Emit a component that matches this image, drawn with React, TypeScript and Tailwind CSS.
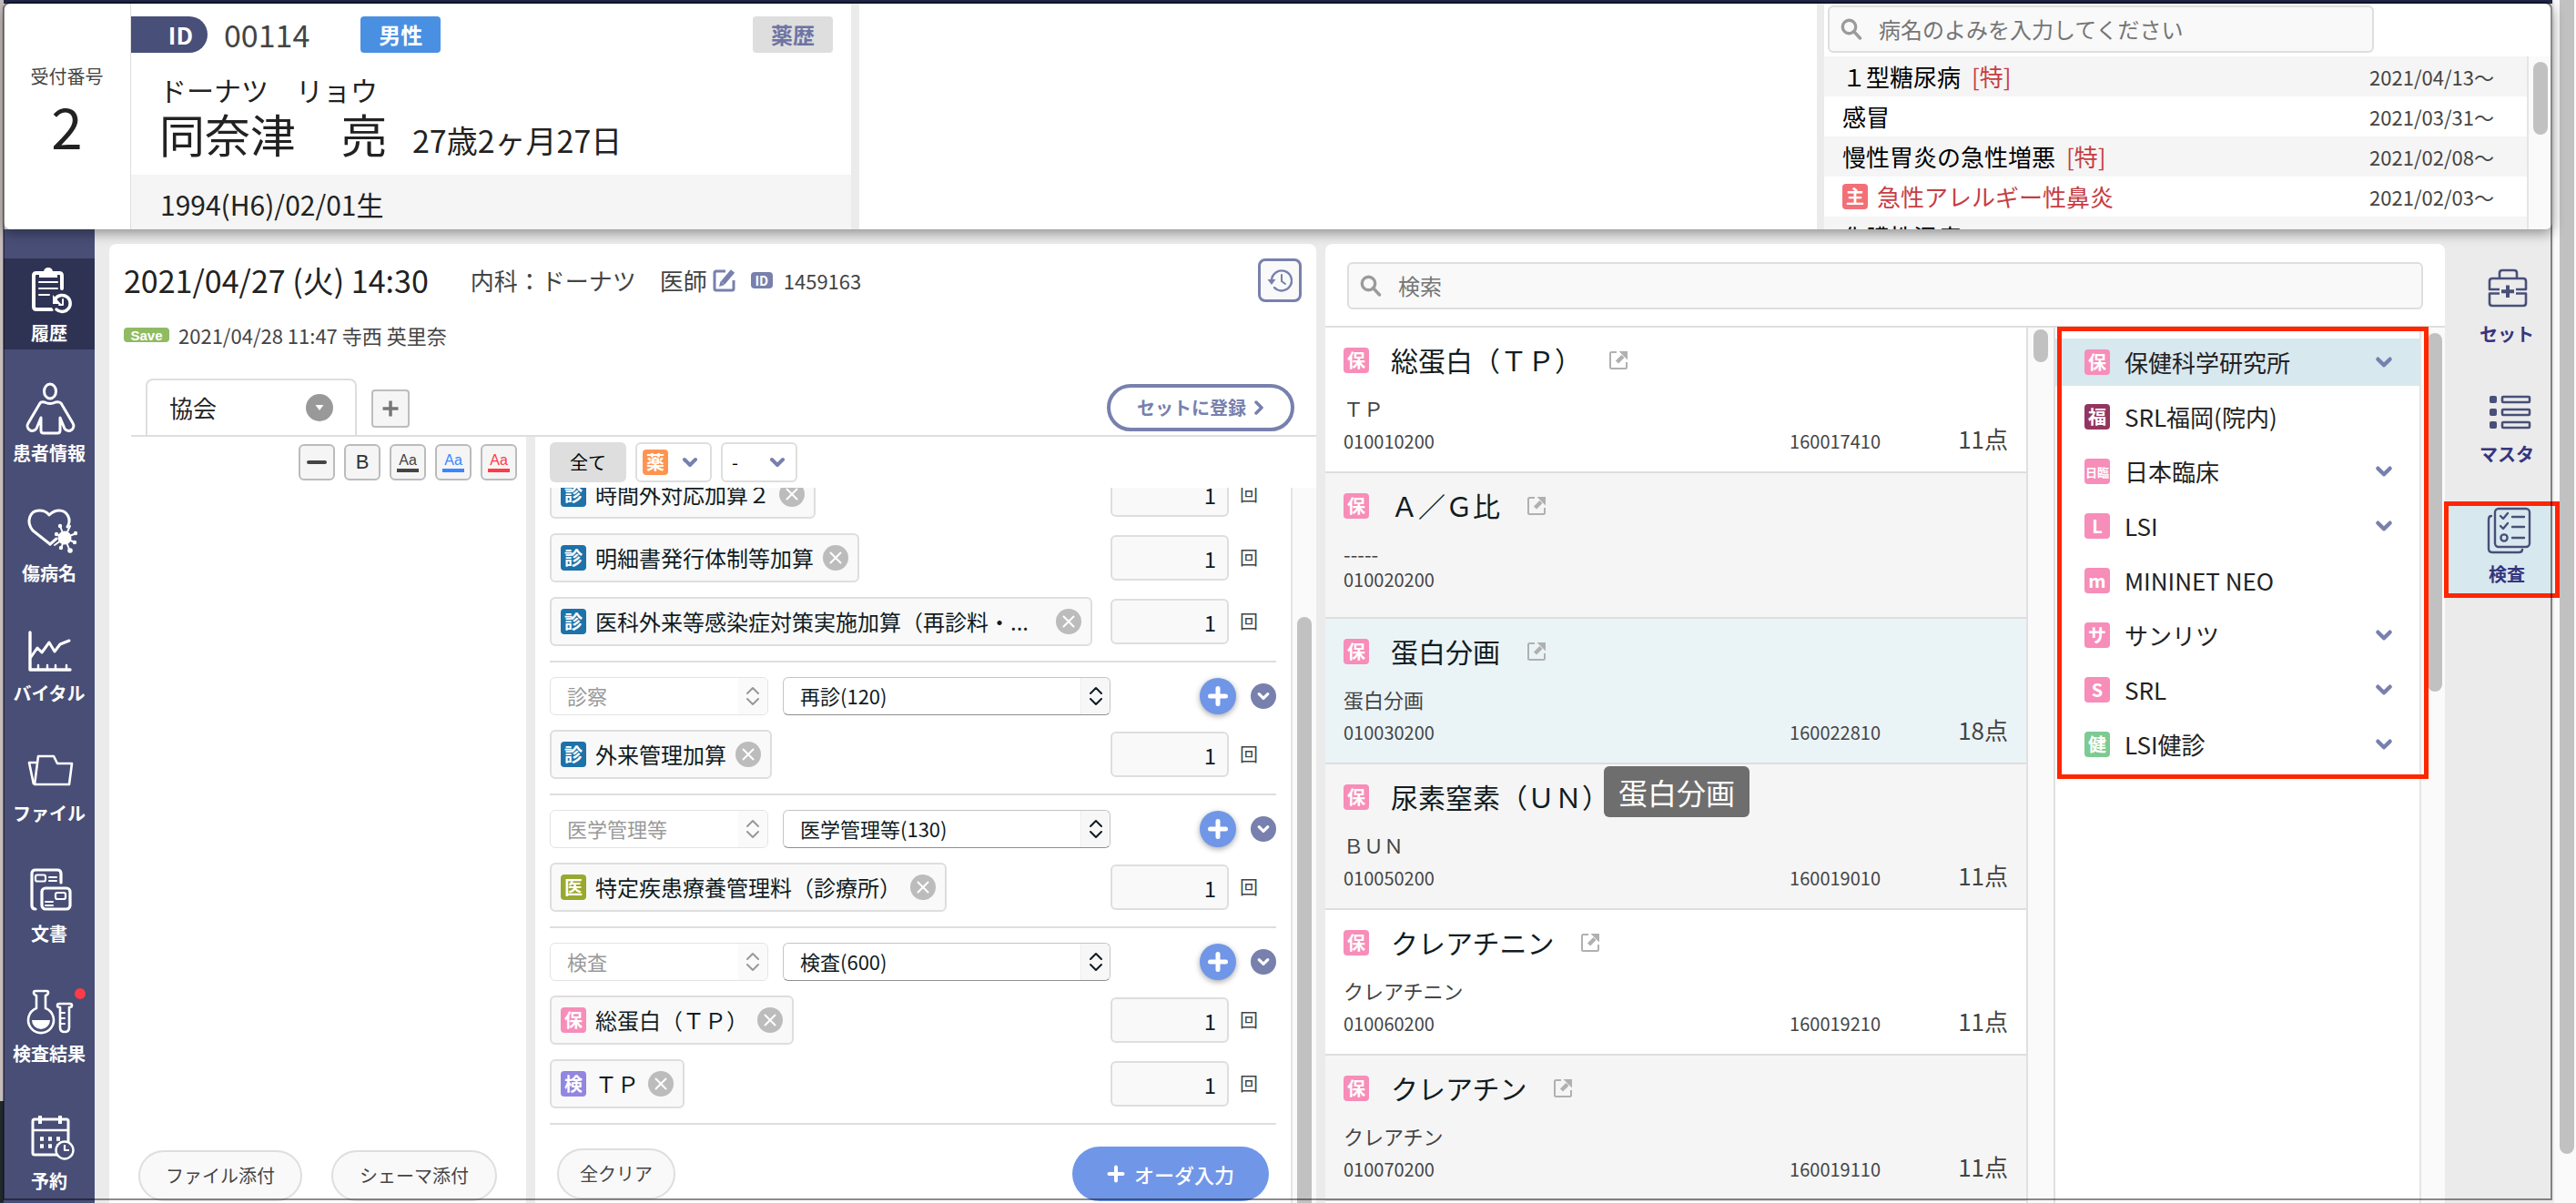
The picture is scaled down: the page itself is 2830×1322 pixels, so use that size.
import React from "react";

const FONT = "font-['Noto_Sans_CJK_JP','Noto_Sans',sans-serif]";

/* ---------- small icons ---------- */

function SearchIcon() {
  return (
    <svg viewBox="0 0 24 24" className="h-6 w-6 shrink-0" fill="none" stroke="#9b9b9b" strokeWidth="3.4">
      <circle cx="9.5" cy="9.5" r="7.2" />
      <path d="M14.5 14.5 21.5 22" strokeLinecap="round" />
    </svg>
  );
}

function ChevronDown({ className }: { className: string }) {
  return (
    <svg viewBox="0 0 20 20" className={className} fill="none" stroke="currentColor" strokeWidth="4" strokeLinecap="round" strokeLinejoin="round">
      <path d="M4 7l6 6 6-6" />
    </svg>
  );
}

function ExternalIcon() {
  return (
    <svg viewBox="0 0 20 20" className="h-5 w-5" fill="none" stroke="#b0b0b0" strokeWidth="2">
      <path d="M8 1H2.500Q1 1 1 2.500V17.500Q1 19 2.500 19H17.500Q19 19 19 17.500V12" />
      <path d="M8.500 12 15 5.500" strokeWidth="4.500" />
      <path d="M10.500 0H20V9.500z" fill="#b0b0b0" stroke="none" />
    </svg>
  );
}

function UpDown() {
  return (
    <svg viewBox="0 0 16 22" className="h-[22px] w-4" fill="none" stroke="currentColor" strokeWidth="2" strokeLinecap="round" strokeLinejoin="round">
      <path d="M2 8l6-6 6 6M2 14l6 6 6-6" />
    </svg>
  );
}

/* ---------- left navigation icons ---------- */

const NAV_SVG = "h-14 w-14 overflow-visible";

function HistoryIcon() {
  return (
    <svg viewBox="0 0 56 56" className={NAV_SVG} fill="none" stroke="#fff" strokeWidth="4" strokeLinecap="round" strokeLinejoin="round">
      <path d="M42 27V13Q42 10 39 10H14Q11 10 11 13V47Q11 50 14 50H31" />
      <path d="M17 15V11Q17 8 20 8H22Q23 4 27 4T32 8H34Q37 8 37 11V15z" fill="#fff" stroke="none" />
      <path d="M17 20H37M17 27H37M17 34H28" strokeWidth="2" />
      <circle cx="42" cy="43" r="12" fill="#2e3354" stroke="none" />
      <path d="M35 38A9 9 0 1 1 36 50" strokeWidth="3.500" />
      <path d="M32 34V44H41z" fill="#fff" stroke="none" />
      <path d="M43 39V45H39" strokeWidth="2" />
    </svg>
  );
}

function PersonIcon() {
  return (
    <svg viewBox="0 0 56 56" className={NAV_SVG} fill="none" stroke="#fff" strokeWidth="3" strokeLinejoin="round">
      <ellipse cx="29" cy="8" rx="6.500" ry="8" />
      <path d="M18 21 5 43a5 5 0 0 0 9 6L19 37V51Q19 54 22 54H37Q40 54 40 51V37L45 49a5 5 0 0 0 9-6L41 21Q39 19 35 20Q29 23 23 20Q19 19 18 21z" />
    </svg>
  );
}

function DiseaseIcon() {
  return (
    <svg viewBox="0 0 56 56" className={NAV_SVG} fill="none" stroke="#fff" strokeWidth="3" strokeLinecap="round" strokeLinejoin="round">
      <path d="M29 44 10 29C2 19 7 7 17 7C23 7 26 9 28 12C31 9 34 7 39 7C48 7 53 17 48 25" />
      <path d="M29 44 36 38" />
      <circle cx="45" cy="37" r="7.500" fill="#fff" stroke="none" />
      <path d="M45 37 40 24M45 37 51 24M45 37 58 32M45 37 56 42M45 37 51 52M45 37 41 49M45 37 34 45M45 37 36 33" strokeWidth="2" />
      <g fill="#fff" stroke="none">
        <circle cx="40" cy="24" r="2.200" />
        <circle cx="57" cy="32" r="2.200" />
        <circle cx="56" cy="42" r="2.200" />
        <circle cx="51" cy="51" r="2.800" />
        <circle cx="41" cy="48" r="2.200" />
        <circle cx="36" cy="33" r="2.200" />
      </g>
    </svg>
  );
}

function VitalIcon() {
  return (
    <svg viewBox="0 0 56 56" className={NAV_SVG} fill="none" stroke="#fff" strokeWidth="3.400" strokeLinecap="round" strokeLinejoin="round">
      <path d="M7 9V50H51" />
      <path d="M8 36 15 26 20 31 28 20 34 30 40 22 50 18" strokeWidth="3" />
      <path d="M16 45V49M26 45V49M35 45V49M47 45V49" strokeWidth="2.400" />
    </svg>
  );
}

function FileIcon() {
  return (
    <svg viewBox="0 0 56 56" className={NAV_SVG} fill="none" stroke="#fff" strokeWidth="2.600" strokeLinejoin="round">
      <path d="M16 13H33L37 21H53L50 44H12z" />
      <path d="M14 20H6L11 44" />
    </svg>
  );
}

function DocIcon() {
  return (
    <svg viewBox="0 0 56 56" className={NAV_SVG} fill="none" stroke="#fff" strokeWidth="3.200" strokeLinecap="round">
      <path d="M41 20V10Q41 6 37 6H13Q9 6 9 10V45Q9 49 13 49" />
      <rect x="20" y="26" width="31" height="23" rx="4" />
      <rect x="13" y="11.500" width="11" height="7" rx="2" strokeWidth="2.200" />
      <rect x="35" y="31" width="11" height="7" rx="2" strokeWidth="2.200" />
      <path d="M28 14H36M28 18H36M24 41H32M24 45H32" strokeWidth="2" />
    </svg>
  );
}

function LabIcon() {
  return (
    <svg viewBox="0 0 56 56" className={NAV_SVG} fill="none" stroke="#fff" strokeWidth="2.600" strokeLinejoin="round" strokeLinecap="round">
      <path d="M14 26V12Q11 11 11 9Q11 7 13 7H25Q27 7 27 9Q27 11 24 12V26A14 14 0 1 1 14 26z" />
      <path d="M9 39H29A10 10 0 0 1 9 39z" fill="#fff" stroke="none" />
      <path d="M40 25Q37 25 37 23Q37 21 39 21H51Q53 21 53 23Q53 25 50 25V47Q50 52 45 52T40 47z" />
      <path d="M41 31H45M41 37H45M41 43H45" strokeWidth="2" />
    </svg>
  );
}

function CalendarIcon() {
  return (
    <svg viewBox="0 0 56 56" className={NAV_SVG} fill="none" stroke="#fff" strokeWidth="3" strokeLinejoin="round">
      <rect x="10" y="8" width="39" height="39" rx="2" />
      <path d="M10 20H49" strokeWidth="2.400" />
      <path d="M18 4V13M40 4V13" strokeWidth="4" />
      <path d="M18 29.500H22M27 29.500H31M36 29.500H40M18 37.500H22M27 37.500H31M36 37.500H40" strokeWidth="4.500" />
      <circle cx="45" cy="42" r="9.500" fill="#484e76" strokeWidth="2.400" />
      <path d="M45 36V42H50" strokeWidth="2.200" />
    </svg>
  );
}

/* ---------- right rail icons ---------- */

function CaseIcon() {
  return (
    <svg viewBox="0 0 56 56" className={NAV_SVG} fill="none" stroke="#484f78" strokeWidth="2.600" strokeLinejoin="round">
      <path d="M20 15V9Q20 6 23 6H36Q39 6 39 9V15" />
      <path d="M20 27H9V18Q9 15 12 15H46Q49 15 49 18V27H38" />
      <path d="M20 31.500H9V42Q9 45 12 45H46Q49 45 49 42V31.500H38" />
      <path d="M29 22.500V36M22 29.300H36" strokeWidth="4" />
    </svg>
  );
}

function ListIcon() {
  return (
    <svg viewBox="0 0 56 56" className={NAV_SVG} fill="none" stroke="#484f78" strokeWidth="2.600" strokeLinejoin="round">
      {[12, 26, 40].map((y) => (
        <g key={y}>
          <rect x="9" y={y} width="8" height="8" rx="2" fill="#484f78" stroke="none" />
          <rect x="23" y={y + 1} width="30" height="6" rx="1" />
        </g>
      ))}
    </svg>
  );
}

function ChecklistIcon() {
  return (
    <svg viewBox="0 0 56 56" className={NAV_SVG} fill="none" stroke="#484f78" strokeWidth="2.400" strokeLinecap="round" strokeLinejoin="round">
      <rect x="15" y="4" width="38" height="42" rx="4" />
      <path d="M11 12Q8 12 8 16V48Q8 52 12 52H41Q45 52 45 49" />
      <path d="M21 12 24 15 29 9M21 23 24 26 29 20M34 13H47M34 24H47M34 36H47" />
      <circle cx="25" cy="36" r="3.600" />
    </svg>
  );
}

/* ---------- shared pieces ---------- */

const BADGE_COLORS: Record<string, string> = {
  pink: "bg-[#f78db9]",
  plum: "bg-[#93355f]",
  green: "bg-[#7dca92]",
  blue: "bg-[#1c72a9]",
  olive: "bg-[#97a92f]",
  violet: "bg-[#9186e0]",
  orange: "bg-[#ff9450]",
  red: "bg-[#f36f76]",
};

function Badge({ text, color }: { text: string; color: string }) {
  return (
    <span
      className={`flex h-7 w-7 shrink-0 items-center justify-center whitespace-nowrap rounded font-bold leading-none text-white ${
        text.length > 1 ? "text-[13px]" : "text-xl"
      } ${BADGE_COLORS[color]}`}
    >
      {text}
    </span>
  );
}

function ItemRow({ badge, color, name, wide }: { badge: string; color: string; name: string; wide?: boolean }) {
  return (
    <div className="mb-4 flex h-[54px] items-center justify-between">
      <div
        className={`flex h-[54px] items-center gap-2.5 rounded-md border-2 border-[#dedede] bg-[#f9f9f9] px-2.5 ${
          wide ? "w-[596px]" : "max-w-[596px]"
        }`}
      >
        <Badge text={badge} color={color} />
        <span className="whitespace-nowrap text-2xl leading-9 text-[#101c22]">{name}</span>
        <button
          type="button"
          aria-label={`${name}を削除`}
          className="ml-auto flex h-7 w-7 shrink-0 items-center justify-center rounded-full bg-[#bcbcbc]"
        >
          <svg viewBox="0 0 14 14" className="h-3.5 w-3.5" stroke="#fff" strokeWidth="2" strokeLinecap="round">
            <path d="M1.500 1.500l11 11M12.500 1.500l-11 11" />
          </svg>
        </button>
      </div>
      <label className="flex w-[182px] shrink-0 items-center gap-3 text-xl text-[#444]">
        <input
          type="text"
          aria-label={`${name}の回数`}
          defaultValue="1"
          className="h-[50px] w-[130px] rounded-md border-2 border-[#dedede] bg-[#f9f9f9] px-3 text-right text-2xl text-[#101c22]"
        />
        回
      </label>
    </div>
  );
}

function GroupHeader({ kind, name }: { kind: string; name: string }) {
  return (
    <>
      <hr className="border-t-2 border-[#dedede]" />
      <div className="my-4 flex h-[42px] items-center">
        <div className="relative mr-4 h-[42px] w-60 text-[#999]">
          <select
            disabled
            aria-label={`${name}の区分`}
            className="h-full w-full appearance-none rounded-md border border-[#e3e3e3] bg-white pb-0.5 pl-[18px] text-[22px] leading-8 opacity-100"
          >
            <option>{kind}</option>
          </select>
          <span className="pointer-events-none absolute inset-y-px right-px flex w-8 items-center justify-center rounded-r-md bg-[#fafafa]">
            <UpDown />
          </span>
        </div>
        <div className="relative h-[42px] w-[360px] text-[#101c22]">
          <select
            aria-label={name}
            className="h-full w-full appearance-none rounded-md border border-[#c4c4c4] border-b-[#8f8f8f] bg-white pb-0.5 pl-[18px] text-[22px] leading-8"
          >
            <option>{name}</option>
          </select>
          <span className="pointer-events-none absolute inset-y-px right-px flex w-8 items-center justify-center rounded-r-md border-l border-[#ececec] bg-[#f7f7f7]">
            <UpDown />
          </span>
        </div>
        <div className="ml-auto flex items-center gap-4">
          <button
            type="button"
            aria-label="追加"
            className="flex h-10 w-10 items-center justify-center rounded-full bg-[#7096e8] shadow-[0_2px_6px_rgba(0,0,0,0.35)]"
          >
            <svg viewBox="0 0 22 22" className="h-[22px] w-[22px]" stroke="#fff" strokeWidth="5" strokeLinecap="round">
              <path d="M11 2.500v17M2.500 11h17" />
            </svg>
          </button>
          <button type="button" aria-label="展開" className="flex h-7 w-7 items-center justify-center rounded-full bg-[#7880ad] text-white">
            <ChevronDown className="h-4 w-4" />
          </button>
        </div>
      </div>
    </>
  );
}

/* ---------- header ---------- */

const DISEASES = [
  { name: "１型糖尿病", special: true, date: "2021/04/13～" },
  { name: "感冒", date: "2021/03/31～" },
  { name: "慢性胃炎の急性増悪", special: true, date: "2021/02/08～" },
  { name: "急性アレルギー性鼻炎", main: true, date: "2021/02/03～" },
  { name: "化膿性湿疹", date: "" },
];

function Header() {
  return (
    <header className="relative z-10 flex h-[248px] shrink-0 overflow-hidden rounded-lg bg-white shadow-[0_4px_14px_rgba(0,0,0,0.4)]">
      <div className="flex w-[140px] shrink-0 flex-col items-center border-r border-[#dedede] pt-16">
        <span className="text-xl leading-8 text-[#444]">受付番号</span>
        <span className="text-[62px] leading-[74px] text-[#222]">2</span>
      </div>
      <section className="flex w-[800px] shrink-0 flex-col border-r-[9px] border-[#ebebeb] text-[#222]">
        <div className="mt-3.5 flex h-10 items-center pr-5">
          <span className="flex h-10 w-[84px] items-center justify-end rounded-r-full bg-[#484f78] pb-0.5 pr-4 text-[26px] font-bold text-white">
            ID
          </span>
          <span className="ml-[18px] text-[34px] leading-9">
            <span className="text-[#444]">00114</span>
          </span>
          <span className="ml-14 flex h-10 w-[88px] items-center justify-center rounded bg-[#4a90e2] text-2xl font-bold text-white">
            男性
          </span>
          <button type="button" className="ml-auto h-10 w-[88px] rounded bg-[#dedede] text-2xl font-bold text-[#6c74a3]">
            薬歴
          </button>
        </div>
        <div className="pl-[31px]">
          <p className="mt-[18px] text-[30px] leading-[44px]">ドーナツ　リョウ</p>
          <p className="flex items-baseline leading-[52px]">
            <span className="text-[50px]">同奈津　亮</span>
            <span className="ml-7 text-[34px]">27歳2ヶ月27日</span>
          </p>
        </div>
        <p className="mt-auto flex h-[60px] items-center bg-[#f5f5f5] pl-8 pt-1 text-[30px] leading-10">1994(H6)/02/01生</p>
      </section>
      <div className="flex-1" />
      <section className="flex w-[808px] shrink-0 flex-col border-l-8 border-[#ebebeb]">
        <label className="ml-1 mt-0.5 flex h-[52px] w-[600px] shrink-0 items-center gap-[18px] rounded-md border-2 border-[#dedede] bg-[#f9f9f9] px-3">
          <SearchIcon />
          <input
            type="text"
            aria-label="病名"
            placeholder="病名のよみを入力してください"
            className="min-w-0 flex-1 bg-transparent text-2xl placeholder:text-[#757575]"
          />
        </label>
        <div className="mt-1 flex min-h-0 flex-1">
          <ul className="flex-1 overflow-hidden">
            {DISEASES.map((d) => (
              <li key={d.name} className="flex h-11 items-center bg-white pl-5 pr-9 odd:bg-[#f5f5f5]">
                {d.main && (
                  <span className="mr-2.5">
                    <Badge text="主" color="red" />
                  </span>
                )}
                <span className={d.main ? "text-[26px] leading-9 text-[#c73d43]" : "text-[26px] leading-9 text-black"}>{d.name}</span>
                {d.special && <span className="ml-3 text-[26px] leading-9 text-[#c73d43]">[特]</span>}
                <span className="ml-auto text-[22px] leading-8 text-[#444]">{d.date}</span>
              </li>
            ))}
          </ul>
          <div className="flex w-7 justify-center border-l-2 border-[#e5e5e5] bg-[#fafafa] pt-1.5">
            <div className="h-20 w-4 rounded-full bg-[#c1c1c1]" />
          </div>
        </div>
      </section>
    </header>
  );
}

/* ---------- left navigation ---------- */

const NAV = [
  { label: "履歴", icon: <HistoryIcon />, active: true },
  { label: "患者情報", icon: <PersonIcon /> },
  { label: "傷病名", icon: <DiseaseIcon /> },
  { label: "バイタル", icon: <VitalIcon /> },
  { label: "ファイル", icon: <FileIcon /> },
  { label: "文書", icon: <DocIcon /> },
  { label: "検査結果", icon: <LabIcon />, dot: true },
  { label: "予約", icon: <CalendarIcon />, late: true },
];

function SideNav() {
  return (
    <nav className="flex w-[100px] shrink-0 flex-col gap-8 bg-[#484e76] pt-8">
      {NAV.map((n) => (
        <button
          key={n.label}
          type="button"
          className={`relative flex h-[100px] shrink-0 flex-col items-center gap-2 pt-1.5 text-white ${n.active ? "bg-[#2e3354]" : ""} ${
            n.late ? "mt-2" : ""
          }`}
        >
          {n.icon}
          <span className="text-xl font-bold leading-6">{n.label}</span>
          {n.dot && <span className="absolute right-2.5 top-2.5 h-3 w-3 rounded-full bg-[#ff3b47]" />}
        </button>
      ))}
    </nav>
  );
}

/* ---------- chart panel ---------- */

function TextColorButton({ label, style, bar }: { label: string; style: string; bar: string }) {
  return (
    <button
      type="button"
      aria-label={label}
      className={`flex h-10 w-10 flex-col items-center justify-center gap-px rounded-md border-2 border-[#bbb] bg-[#f5f5f5] text-base leading-4 ${style}`}
    >
      <span className="font-['Liberation_Sans',sans-serif]">Aa</span>
      <span className={`h-1 w-6 ${bar}`} />
    </button>
  );
}

function ChartPanel() {
  return (
    <main className="flex min-w-0 flex-col overflow-hidden rounded-t-lg bg-white">
      <div className="flex items-center pl-4 pr-4 pt-4 text-[#444]">
        <h1 className="text-[34px] leading-[48px] text-[#222]">2021/04/27 (火) 14:30</h1>
        <span className="ml-[46px] text-[26px] leading-9">内科：ドーナツ　医師</span>
        <button type="button" aria-label="医師を編集" className="ml-1.5">
          <svg viewBox="0 0 26 26" className="h-[26px] w-[26px]" fill="none" stroke="#7880ad" strokeWidth="3">
            <path d="M14 3H4Q2 3 2 5V22Q2 24 4 24H21Q23 24 23 22V13" />
            <path d="M11 16 22 3" strokeWidth="5.500" />
            <path d="M7 20 8.500 14 13 18z" fill="#7880ad" stroke="none" />
          </svg>
        </button>
        <span className="ml-4 flex h-[18px] w-6 items-center justify-center rounded bg-[#7880ad] text-[14px] font-bold leading-none text-white">
          ID
        </span>
        <span className="ml-3 text-[22px] leading-8">1459163</span>
        <button
          type="button"
          aria-label="履歴を表示"
          className="ml-auto flex h-12 w-12 items-center justify-center rounded-lg border-[3px] border-[#7880ad] bg-[#f9f9f9]"
        >
          <svg viewBox="0 0 28 28" className="h-7 w-7" fill="none" stroke="#7880ad" strokeWidth="2.400" strokeLinecap="round">
            <path d="M5 14A11 11 0 1 1 8 22" />
            <path d="M0.500 13H9.500L5 19z" fill="#7880ad" stroke="none" />
            <path d="M16 8V15L20 18" strokeWidth="2" />
          </svg>
        </button>
      </div>
      <div className="mt-5 flex h-8 items-center gap-2.5 pl-4">
        <span className="flex h-4 w-[50px] items-center justify-center rounded bg-[#8fbb63] font-['Liberation_Sans',sans-serif] text-[15px] font-bold leading-none text-white">
          Save
        </span>
        <span className="text-[22px] leading-8 text-[#444]">2021/04/28 11:47 寺西 英里奈</span>
      </div>
      <div className="ml-6 mt-8 flex items-end border-b-2 border-[#dedede] pl-4 pr-6">
        <div className="flex h-[62px] w-[232px] items-center rounded-t-lg border-2 border-b-0 border-[#dedede] pl-6 pr-6">
          <span className="text-[26px] leading-9 text-[#222]">協会</span>
          <button type="button" aria-label="保険を選択" className="ml-auto flex h-[30px] w-[30px] items-center justify-center rounded-full bg-[#999]">
            <svg viewBox="0 0 10 8" className="h-2 w-2.5" fill="#fff">
              <path d="M0.500 1h9L5 7z" />
            </svg>
          </button>
        </div>
        <button
          type="button"
          aria-label="タブを追加"
          className="mb-2 ml-4 flex h-[42px] w-[42px] items-center justify-center rounded border-2 border-[#bdbdbd] bg-[#f5f5f5]"
        >
          <svg viewBox="0 0 18 18" className="h-[18px] w-[18px]" stroke="#777" strokeWidth="3.500">
            <path d="M9 0.500v17M0.500 9h17" />
          </svg>
        </button>
        <button
          type="button"
          className="mb-1 ml-auto flex h-[52px] w-[206px] items-center justify-center gap-2 rounded-full border-4 border-[#7880ad] bg-white text-xl font-bold text-[#7880ad]"
        >
          セットに登録
          <svg viewBox="0 0 12 16" className="h-4 w-3" fill="none" stroke="#7880ad" strokeWidth="3.500" strokeLinecap="round" strokeLinejoin="round">
            <path d="M3 2l6 6-6 6" />
          </svg>
        </button>
      </div>
      <div className="flex min-h-0 flex-1">
        <section className="flex w-[468px] shrink-0 flex-col border-r-[10px] border-[#ebebeb]">
          <div className="flex justify-end gap-2.5 pr-2.5 pt-2">
            <button type="button" aria-label="罫線" className="flex h-10 w-10 items-center justify-center rounded-md border-2 border-[#bbb] bg-[#f5f5f5]">
              <span className="h-1 w-[22px] rounded-full bg-[#444]" />
            </button>
            <button
              type="button"
              aria-label="太字"
              className="h-10 w-10 rounded-md border-2 border-[#bbb] bg-[#f5f5f5] font-['Liberation_Sans',sans-serif] text-[22px] leading-none text-[#333]"
            >
              B
            </button>
            <TextColorButton label="黒文字" style="text-[#444]" bar="bg-[#444]" />
            <TextColorButton label="青文字" style="text-[#3b87ff]" bar="bg-[#3b87ff]" />
            <TextColorButton label="赤文字" style="text-[#ff3b47]" bar="bg-[#ff3b47]" />
          </div>
          <textarea aria-label="所見" className="min-h-0 flex-1 resize-none text-2xl" />
          <div className="mb-0.5 flex gap-8 pl-8">
            <button type="button" className="h-14 w-[180px] rounded-full border-2 border-[#dedede] bg-[#f9f9f9] text-xl text-[#444]">
              ファイル添付
            </button>
            <button type="button" className="h-14 w-[182px] rounded-full border-2 border-[#dedede] bg-[#f9f9f9] text-xl text-[#444]">
              シェーマ添付
            </button>
          </div>
        </section>
        <section className="flex min-w-0 flex-1 flex-col">
          <div className="flex h-14 shrink-0 gap-2.5 pl-4 pt-1.5 text-black">
            <button type="button" className="h-11 w-[84px] rounded-md bg-[#dedede] text-xl">
              全て
            </button>
            <label className="relative flex h-11 w-[84px] items-center justify-between rounded-md border-2 border-[#dedede] pl-1.5 pr-3 text-[#7880ad]">
              <Badge text="薬" color="orange" />
              <ChevronDown className="h-5 w-5" />
              <select aria-label="薬の絞り込み" className="absolute inset-0 opacity-0">
                <option>薬</option>
              </select>
            </label>
            <div className="relative h-11 w-[84px] text-[#7880ad]">
              <select aria-label="絞り込み" className="h-full w-full appearance-none rounded-md border-2 border-[#dedede] bg-white pl-2.5 text-xl text-black">
                <option>-</option>
              </select>
              <ChevronDown className="pointer-events-none absolute right-3 top-3 h-5 w-5" />
            </div>
          </div>
          <div className="flex min-h-0 flex-1 overflow-hidden">
            <div className="-mt-5 min-w-0 flex-1 px-4">
              <ItemRow badge="診" color="blue" name="時間外対応加算２" />
              <ItemRow badge="診" color="blue" name="明細書発行体制等加算" />
              <ItemRow badge="診" color="blue" name="医科外来等感染症対策実施加算（再診料・..." wide />
              <GroupHeader kind="診察" name="再診(120)" />
              <ItemRow badge="診" color="blue" name="外来管理加算" />
              <GroupHeader kind="医学管理等" name="医学管理等(130)" />
              <ItemRow badge="医" color="olive" name="特定疾患療養管理料（診療所）" />
              <GroupHeader kind="検査" name="検査(600)" />
              <ItemRow badge="保" color="pink" name="総蛋白（ＴＰ）" />
              <ItemRow badge="検" color="violet" name="ＴＰ" />
              <hr className="border-t-2 border-[#dedede]" />
              <div className="mt-6 flex items-center justify-between px-2">
                <button type="button" className="h-14 w-[130px] rounded-full border-2 border-[#dedede] bg-[#f9f9f9] text-xl text-[#444]">
                  全クリア
                </button>
                <button
                  type="button"
                  className="flex h-[60px] w-[216px] items-center justify-center gap-2.5 rounded-full bg-[#7096e8] text-[22px] font-medium text-white"
                >
                  <svg viewBox="0 0 20 20" className="h-5 w-5" stroke="#fff" strokeWidth="4" strokeLinecap="round">
                    <path d="M10 2.500v15M2.500 10h15" />
                  </svg>
                  オーダ入力
                </button>
              </div>
            </div>
            <div className="flex w-7 shrink-0 justify-center border-l-2 border-[#e5e5e5] bg-[#fafafa] pt-[142px]">
              <div className="w-4 rounded-t-full bg-[#c1c1c1]" />
            </div>
          </div>
        </section>
      </div>
    </main>
  );
}

/* ---------- examination search panel ---------- */

const TESTS = [
  { name: "総蛋白（ＴＰ）", sub: "ＴＰ", code: "010010200", claim: "160017410", points: "11点", bg: "bg-white" },
  { name: "Ａ／Ｇ比", sub: "-----", code: "010020200", bg: "bg-[#f5f5f5]" },
  { name: "蛋白分画", sub: "蛋白分画", code: "010030200", claim: "160022810", points: "18点", bg: "bg-[#eaf4f7]" },
  { name: "尿素窒素（ＵＮ）", sub: "ＢＵＮ", code: "010050200", claim: "160019010", points: "11点", bg: "bg-[#f5f5f5]", tooltip: "蛋白分画" },
  { name: "クレアチニン", sub: "クレアチニン", code: "010060200", claim: "160019210", points: "11点", bg: "bg-white" },
  { name: "クレアチン", sub: "クレアチン", code: "010070200", claim: "160019110", points: "11点", bg: "bg-[#f5f5f5]" },
];

const LABS = [
  { badge: "保", color: "pink", name: "保健科学研究所", open: true, active: true },
  { badge: "福", color: "plum", name: "SRL福岡(院内)" },
  { badge: "日臨", color: "pink", name: "日本臨床", open: true },
  { badge: "L", color: "pink", name: "LSI", open: true },
  { badge: "m", color: "pink", name: "MININET NEO" },
  { badge: "サ", color: "pink", name: "サンリツ", open: true },
  { badge: "S", color: "pink", name: "SRL", open: true },
  { badge: "健", color: "green", name: "LSI健診", open: true },
];

function ExamPanel() {
  return (
    <section className="flex min-w-0 flex-col rounded-t-lg bg-white">
      <div className="border-b-2 border-[#dedede] px-6 pb-[18px] pt-5">
        <label className="flex h-[52px] items-center gap-[18px] rounded-md border-2 border-[#dedede] bg-[#f9f9f9] px-3">
          <SearchIcon />
          <input type="text" aria-label="検索" placeholder="検索" className="min-w-0 flex-1 bg-transparent text-2xl placeholder:text-[#757575]" />
        </label>
      </div>
      <div className="flex min-h-0 flex-1">
        <ul className="min-w-0 flex-1 overflow-hidden">
          {TESTS.map((t) => (
            <li key={t.code} className={`relative flex h-40 flex-col border-b-2 border-[#dedede] px-5 pt-3.5 text-[#444] ${t.bg}`}>
              <div className="flex h-11 items-center">
                <Badge text="保" color="pink" />
                <span className="ml-6 pb-0.5 text-[30px] leading-[42px] text-[#101c22]">{t.name}</span>
                <button type="button" aria-label={`${t.name}の詳細`} className="ml-[30px]">
                  <ExternalIcon />
                </button>
              </div>
              <p className="mt-[15px] text-[22px] leading-[30px]">{t.sub}</p>
              <div className="flex items-baseline text-xl">
                <span>{t.code}</span>
                {t.claim && <span className="ml-auto">{t.claim}</span>}
                {t.points && <span className="w-[140px] text-right text-[26px] leading-[38px]">{t.points}</span>}
              </div>
              {t.tooltip && (
                <span
                  role="tooltip"
                  className="absolute left-[306px] top-0.5 flex h-14 items-center rounded-md bg-[#6e6e6e] px-4 text-[32px] leading-10 text-white"
                >
                  {t.tooltip}
                </span>
              )}
            </li>
          ))}
        </ul>
        <div className="flex w-8 shrink-0 justify-center border-x-2 border-[#e0e0e0] bg-[#fafafa] pt-0.5">
          <div className="h-9 w-4 rounded-full bg-[#c1c1c1]" />
        </div>
        <div className="relative flex w-[428px] shrink-0">
          <ul className="flex flex-1 flex-col gap-2 pt-3">
            {LABS.map((l) => (
              <li key={l.name}>
                <button
                  type="button"
                  className={`flex h-[52px] w-full items-center pl-8 pr-7 text-[#222] ${l.active ? "bg-[#d8e8ef]" : ""}`}
                >
                  <Badge text={l.badge} color={l.color} />
                  <span className="ml-4 text-[26px] leading-9">{l.name}</span>
                  {l.open && <ChevronDown className="ml-auto h-[22px] w-[22px] text-[#7880ad]" />}
                </button>
              </li>
            ))}
          </ul>
          <div className="flex w-7 justify-end border-l-2 border-[#e5e5e5] bg-[#fafafa] pr-[3px] pt-1.5">
            <div className="h-[394px] w-4 rounded-full bg-[#c1c1c1]" />
          </div>
          <div className="pointer-events-none absolute -top-px left-0.5 right-[18px] h-[497px] border-[5px] border-[#ff2600]" />
        </div>
      </div>
    </section>
  );
}

const TOOLS = [
  { label: "セット", icon: <CaseIcon /> },
  { label: "マスタ", icon: <ListIcon /> },
  { label: "検査", icon: <ChecklistIcon />, active: true },
];

function ToolRail() {
  return (
    <aside className="flex w-[118px] shrink-0 flex-col gap-7 pt-[35px]">
      {TOOLS.map((t) => (
        <button
          key={t.label}
          type="button"
          className={`relative flex h-[104px] w-full flex-col items-center gap-2 pl-[18px] pt-1 text-[#35357f] ${t.active ? "bg-[#d8e8ef]" : ""}`}
        >
          {t.icon}
          <span className="text-xl font-bold leading-6">{t.label}</span>
          {t.active && <span className="pointer-events-none absolute -bottom-0.5 -left-px -right-2 top-0 border-[5px] border-[#ff2600]" />}
        </button>
      ))}
    </aside>
  );
}

export default function App() {
  return (
    <div className={`relative flex h-screen w-full overflow-hidden bg-[#fafafa] ${FONT}`}>
      <div className="flex w-1 shrink-0 flex-col bg-[#c6bcbc]">
        <div className="mt-auto h-28 bg-[#20282c]" />
      </div>
      <div className="flex min-w-0 flex-1 flex-col bg-[#ebebeb]">
        <div className="h-1 shrink-0 bg-[#20274a]" />
        <Header />
        <div className="flex min-h-0 flex-1">
          <SideNav />
          <div className="grid min-w-0 flex-1 grid-cols-[1326fr_1230fr] grid-rows-[minmax(0,1fr)] gap-2.5 pl-4 pt-4">
            <ChartPanel />
            <ExamPanel />
          </div>
          <ToolRail />
        </div>
      </div>
      <div className="w-[26px] shrink-0 border-l-2 border-[#ececec]">
        <div className="ml-1.5 h-[calc(100%-54px)] w-4 rounded-b-full bg-[#c1c1c1]" />
      </div>
      <div className="pointer-events-none absolute bottom-[3px] left-[3px] right-[26px] top-0.5 z-20 rounded-t-lg border-2 border-black/45" />
    </div>
  );
}
